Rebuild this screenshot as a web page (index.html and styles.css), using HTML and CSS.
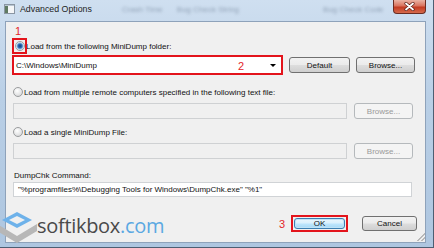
FILE: index.html
```html
<!DOCTYPE html>
<html lang="en">

<head>
  <meta charset="UTF-8">
  <title>Advanced Options</title>
  <link rel="stylesheet" href="styles.css">
</head>

<body>

  <div class="window">
    <div class="titlebar">
      <svg class="app-icon" width="11" height="10" viewBox="0 0 11 10">
        <rect x="0.5" y="0.5" width="10" height="9" fill="#f4f6f8" stroke="#8a96a3"/>
        <rect x="1" y="2" width="3" height="7" fill="#5f7a62"/>
        <rect x="1" y="1" width="9" height="1" fill="#b9c6d3"/>
      </svg>
      <span class="title">Advanced Options</span>
      <span class="ghost ghost-1">Crash Time</span>
      <span class="ghost ghost-2">Bug Check String</span>
      <span class="ghost ghost-3">Bug Check Code</span>
      <div class="close">
        <svg width="11" height="9" viewBox="0 0 11 9">
          <path d="M2 1.5 L9 7.5 M9 1.5 L2 7.5" stroke="#5a2018" stroke-width="3.2" stroke-linecap="round"/>
          <path d="M2 1.5 L9 7.5 M9 1.5 L2 7.5" stroke="#fff" stroke-width="1.8" stroke-linecap="round"/>
        </svg>
      </div>
    </div>

    <div class="client">
      <div class="mark mark-top">1</div>

      <div class="radio-row first">
        <span class="red-box"></span>
        <span class="radio checked"></span>
        <span class="label">Load from the following MiniDump folder:</span>
      </div>

      <div class="field-row">
        <div class="combo">
          <span class="combo-text">C:\Windows\MiniDump</span>
          <span class="mark mark-in">2</span>
          <span class="arrow"></span>
        </div>
        <div class="btn btn-default">Default</div>
        <div class="btn btn-browse">Browse...</div>
      </div>

      <div class="radio-row second">
        <span class="radio"></span>
        <span class="label">Load from multiple remote computers specified in the following text file:</span>
      </div>
      <div class="field-row off">
        <div class="textbox disabled"></div>
        <div class="btn disabled">Browse...</div>
      </div>

      <div class="radio-row third">
        <span class="radio"></span>
        <span class="label">Load a single MiniDump File:</span>
      </div>
      <div class="field-row off">
        <div class="textbox disabled"></div>
        <div class="btn disabled">Browse...</div>
      </div>

      <div class="cmd-label">DumpChk Command:</div>
      <div class="textbox command">"%programfiles%\Debugging Tools for Windows\DumpChk.exe" "%1"</div>

      <div class="footer">
        <span class="mark mark-3">3</span>
        <div class="ok-box">
          <div class="btn btn-ok">OK</div>
        </div>
        <div class="btn btn-cancel">Cancel</div>
        <span class="grip"></span>
      </div>
    </div>

    <div class="watermark">
      <svg class="logo" width="40" height="34" viewBox="0 0 40 34">
        <polygon points="20,0 35,8 20,16 5,8" fill="#6eb2ea"/>
        <polygon points="20,4 28,8 20,12 12,8" fill="#f0f0f0"/>
        <polygon points="0,12 20,24 40,12 40,19 20,31 0,19" fill="#b7b7b7"/>
      </svg>
      <span class="brand">softikbox</span><span class="brand-com">.com</span>
    </div>
  </div>

</body>

</html>
```

FILE: styles.css
```css
* {
  box-sizing: border-box;
}

body {
  margin: 0;
  width: 434px;
  height: 248px;
  overflow: hidden;
  background-color: #6f86a0;
  font-family: "Liberation Sans", Arial, sans-serif;
  font-size: 8px;
  color: #111;
}

.window {
  position: relative;
  width: 434px;
  height: 248px;
  padding: 0 7px 5px 5px;
  background: linear-gradient(to bottom, #cfdff0, #b9cfe6 40%, #aec6e0);
  border-right: 1px solid #4d5e72;
  border-bottom: 1px solid #4d5e72;
}

/* title bar */
.titlebar {
  height: 21px;
  display: flex;
  align-items: flex-start;
  margin-left: -5px;
  margin-right: -7px;
  padding-left: 4px;
  white-space: nowrap;
}

.app-icon {
  margin-top: 4px;
  flex-shrink: 0;
}

.title {
  margin-left: 5px;
  margin-top: 4px;
  font-size: 8.8px;
  color: #1e1e1e;
}

.ghost {
  margin-top: 5px;
  font-size: 8px;
  color: #7d8ea3;
  filter: blur(1.4px);
  opacity: .75;
}

.ghost-1 {
  margin-left: 30px;
}

.ghost-2 {
  margin-left: 14px;
}

.ghost-3 {
  margin-left: 84px;
}

.close {
  margin-left: auto;
  margin-right: 7px;
  width: 33px;
  height: 14px;
  display: flex;
  align-items: center;
  justify-content: center;
  flex-shrink: 0;
  border: 1px solid #6a2c22;
  border-top: 0;
  border-radius: 0 0 4px 4px;
  background: linear-gradient(to bottom, #eab3a4, #d9735e 45%, #c33b22 55%, #d56a4c);
}

/* client area */
.client {
  position: relative;
  height: 222px;
  padding: 0 7px;
  background-color: #f0f0f0;
  border: 1px solid #8ea2ba;
}

.mark {
  font-family: "Liberation Sans", sans-serif;
  color: #e3262b;
  font-size: 11px;
}

.mark-top {
  margin-top: 4px;
  margin-left: 2px;
  height: 10px;
  line-height: 10px;
}

.radio-row {
  position: relative;
  height: 16px;
  display: flex;
  align-items: center;
  padding-left: 2px;
}

.radio-row.first {
  margin-top: 2px;
}

.radio-row.second {
  margin-top: 9px;
  padding-left: 0;
}

.radio-row.third {
  margin-top: 5px;
  padding-left: 0;
}

.red-box {
  position: absolute;
  left: -1px;
  top: 0;
  width: 15px;
  height: 16px;
  border: 2px solid #e3141c;
}

.radio {
  width: 10px;
  height: 10px;
  border-radius: 50%;
  border: 1px solid #9a9c9e;
  background: radial-gradient(circle at 40% 35%, #fff, #e2e3e4 60%, #c9cbcd);
  flex-shrink: 0;
}

.radio.checked {
  background: radial-gradient(circle, #0f3d7a 0, #2c6cb6 2px, #8fb7de 3px, #f4f4f4 4px);
}

.label {
  margin-left: 1px;
  white-space: nowrap;
}

.field-row {
  display: flex;
  align-items: center;
  height: 20px;
  margin-top: 1px;
}

.field-row.off {
  height: 16px;
  margin-top: 3px;
}

.combo {
  position: relative;
  margin-left: -1px;
  width: 271px;
  height: 20px;
  display: flex;
  align-items: center;
  padding-left: 2px;
  background-color: #fff;
  border: 2px solid #e3141c;
}

.mark-in {
  position: absolute;
  left: 224px;
  top: 3px;
}

.arrow {
  position: absolute;
  right: 5px;
  top: 7px;
  border-left: 3px solid transparent;
  border-right: 3px solid transparent;
  border-top: 3px solid #000;
}

.btn {
  height: 16px;
  display: flex;
  align-items: center;
  justify-content: center;
  border: 1px solid #707070;
  border-radius: 3px;
  background: linear-gradient(to bottom, #f2f2f2, #ebebeb 48%, #dddddd 52%, #cfcfcf);
  white-space: nowrap;
}

.btn-default {
  width: 61px;
  margin-left: 6px;
}

.btn-browse {
  width: 59px;
  margin-left: 6px;
}

.btn.disabled {
  width: 59px;
  margin-left: 7px;
  border-color: #b5b9bc;
  background: #f4f4f4;
  color: #9a9a9a;
}

.textbox {
  height: 16px;
  border: 1px solid #c7cacd;
  background-color: #f0f0f0;
}

.textbox.disabled {
  width: 334px;
  border-color: #cfd1d3;
}

.cmd-label {
  margin-top: 11px;
  height: 12px;
  line-height: 12px;
  margin-left: 1px;
}

.textbox.command {
  width: 399px;
  height: 15px;
  line-height: 13px;
  padding-left: 4px;
  background-color: #fff;
  border-color: #d0d3d6;
  white-space: nowrap;
}

.footer {
  position: relative;
  height: 17px;
  margin-top: 18px;
  display: flex;
  align-items: center;
  justify-content: flex-end;
  padding-right: 1px;
}

.mark-3 {
  margin-right: 6px;
}

.ok-box {
  width: 57px;
  height: 17px;
  padding: 1px;
  border: 2px solid #e3141c;
}

.btn-ok {
  width: 100%;
  height: 100%;
  border-color: #3c7fb1;
  background: linear-gradient(to bottom, #eaf6fd, #d9f0fc 48%, #bee6fd 52%, #a7d9f5);
  box-shadow: inset 0 0 0 1px #bfe3f7;
}

.btn-cancel {
  width: 55px;
  height: 15px;
  margin-left: 14px;
}

.grip {
  position: absolute;
  right: -7px;
  bottom: -9px;
  width: 8px;
  height: 8px;
  background: linear-gradient(135deg, transparent 50%, #b8b8b8 50%, #b8b8b8 60%, transparent 60%, transparent 75%, #b8b8b8 75%, #b8b8b8 85%, transparent 85%);
}

/* watermark */
.watermark {
  position: absolute;
  left: 0;
  top: 211px;
  display: flex;
  align-items: flex-start;
}

.logo {
  margin-top: 1px;
  margin-left: -3px;
}

.brand,
.brand-com {
  font-family: "Open Sans", sans-serif;
  font-size: 20px;
  line-height: 30px;
  letter-spacing: -0.3px;
}

.brand {
  color: #4a4a4a;
}

.brand-com {
  color: #5ba8e2;
}
```
